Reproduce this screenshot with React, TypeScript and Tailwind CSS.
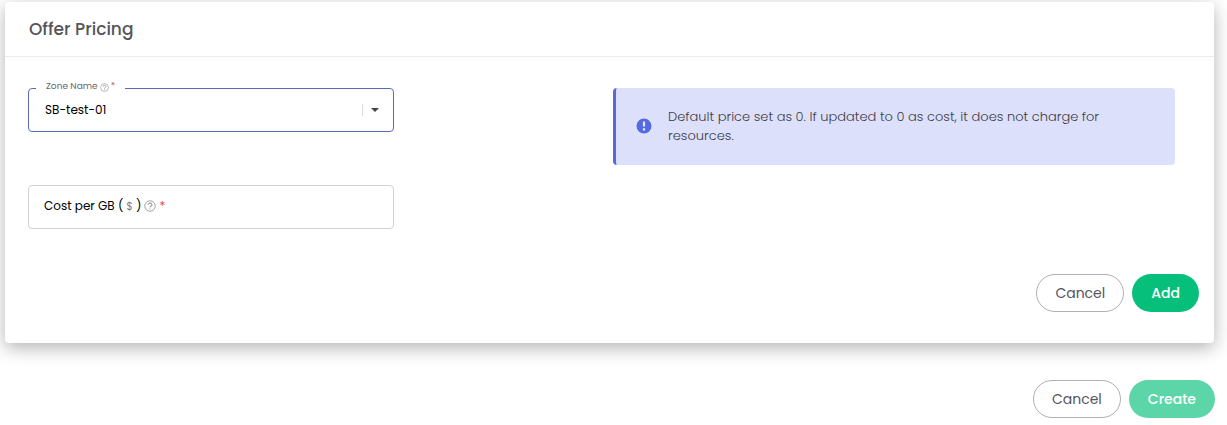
import { useId, useState } from "react";
import { clsx } from "clsx";

const ZONES = ["SB-test-01"];

const HelpIcon = ({ className }: { className: string }) => (
  <svg viewBox="0 0 24 24" fill="none" stroke="currentColor" strokeWidth="2" className={className} aria-hidden="true">
    <circle cx="12" cy="12" r="10.5" />
    <path d="M8.3 9.6a3.7 3.4 0 1 1 5.4 2.8c-1.2.7-1.7 1.2-1.7 2.4M12 16.8v2.4" strokeWidth="2.6" />
  </svg>
);

const AlertIcon = () => (
  <svg viewBox="0 0 16 16" className="size-4 shrink-0" aria-hidden="true">
    <circle cx="8" cy="8" r="7.5" fill="#5569e0" />
    <path d="M6.9 3.6h2.2v5H6.9zM6.9 10.2h2.2v2.2H6.9z" fill="#e6e9fc" />
  </svg>
);

interface PillButtonProps {
  children: React.ReactNode;
  variant: "outline" | "solid";
  disabled?: boolean;
}

const PillButton = ({ children, variant, disabled }: PillButtonProps) => (
  <button
    type="button"
    disabled={disabled}
    className={clsx(
      "h-[38px] rounded-full border px-[18px] text-sm",
      variant === "outline"
        ? "border-[#b0b0b4] bg-white font-normal text-[#54555f]"
        : "border-transparent bg-[#06bf7b] font-medium text-white",
      disabled && "opacity-65"
    )}
  >
    {children}
  </button>
);

const ZoneSelect = () => {
  const id = useId();
  const [zone, setZone] = useState(ZONES[0]);

  return (
    <div className="relative w-full max-w-[366px]">
      <select
        id={id}
        value={zone}
        onChange={(e) => setZone(e.target.value)}
        className="block h-11 w-full appearance-none rounded border border-[#5b69bd] bg-white px-4 text-xs text-black outline-none"
      >
        {ZONES.map((name) => (
          <option key={name}>{name}</option>
        ))}
      </select>
      <label
        htmlFor={id}
        className="absolute -top-2 left-2 flex h-3.5 items-center gap-0.5 bg-white px-2.5 text-[9px] text-[#66676e]"
      >
        Zone Name
        <HelpIcon className="size-[9px] text-[#a5a5a5]" />
        <span className="text-[#d9534f]">*</span>
      </label>
      <div className="pointer-events-none absolute inset-y-0 right-[15px] flex items-center gap-2">
        <span className="h-3 w-px bg-[#dcdcdc]" />
        <svg viewBox="0 0 8 4" className="h-1 w-2" aria-hidden="true">
          <path d="M0 0h8L4 4z" fill="#444" />
        </svg>
      </div>
    </div>
  );
};

const CostInput = () => {
  const id = useId();
  const [cost, setCost] = useState("");

  return (
    <div className="relative w-full max-w-[366px]">
      <input
        id={id}
        value={cost}
        inputMode="decimal"
        onChange={(e) => setCost(e.target.value)}
        className="block h-11 w-full rounded border border-[#d2d2d4] bg-white px-4 text-xs text-black outline-none"
      />
      <label
        htmlFor={id}
        className={clsx(
          "pointer-events-none absolute top-0 bottom-0.5 left-4 flex items-center gap-[3px] text-xs text-black",
          cost && "invisible"
        )}
      >
        <span>
          Cost per GB ( <span className="text-[10px] text-[#77787e]">$</span> )
        </span>
        <HelpIcon className="size-3 text-[#a5a5a5]" />
        <span className="text-[#d9534f]">*</span>
      </label>
    </div>
  );
};

export default function App() {
  return (
    <main className="pt-0.5 pr-3 pl-[5px] font-['Poppins','Inter',sans-serif] text-[#54555f]">
      <section className="mr-px rounded-sm bg-white shadow-[0_5px_18px_rgba(0,0,0,0.3)]">
        <header className="border-b border-[#ebebeb] px-6 py-[13px]">
          <h2 className="text-[17px] leading-7 font-medium text-[#54555a]">Offer Pricing</h2>
        </header>

        <form className="py-[31px]">
          <div className="grid grid-cols-2 gap-[23px] pr-[39px] pl-[23px]">
            <div className="flex flex-col gap-[53px]">
              <ZoneSelect />
              <CostInput />
            </div>
            <div
              role="note"
              className="flex items-center gap-4 self-start rounded border-l-[3px] border-[#5569e0] bg-[#dde0fb] pt-[19px] pr-16 pb-5 pl-5 text-[13px] leading-[19px] font-light text-[#3c3d48]"
            >
              <AlertIcon />
              <p>Default price set as 0. If updated to 0 as cost, it does not charge for resources.</p>
            </div>
          </div>

          <div className="mt-[45px] flex justify-end gap-2 pr-[15px]">
            <PillButton variant="outline">Cancel</PillButton>
            <PillButton variant="solid">Add</PillButton>
          </div>
        </form>
      </section>

      <div className="mt-[37px] flex justify-end gap-2">
        <PillButton variant="outline">Cancel</PillButton>
        <PillButton variant="solid" disabled>
          Create
        </PillButton>
      </div>
    </main>
  );
}
